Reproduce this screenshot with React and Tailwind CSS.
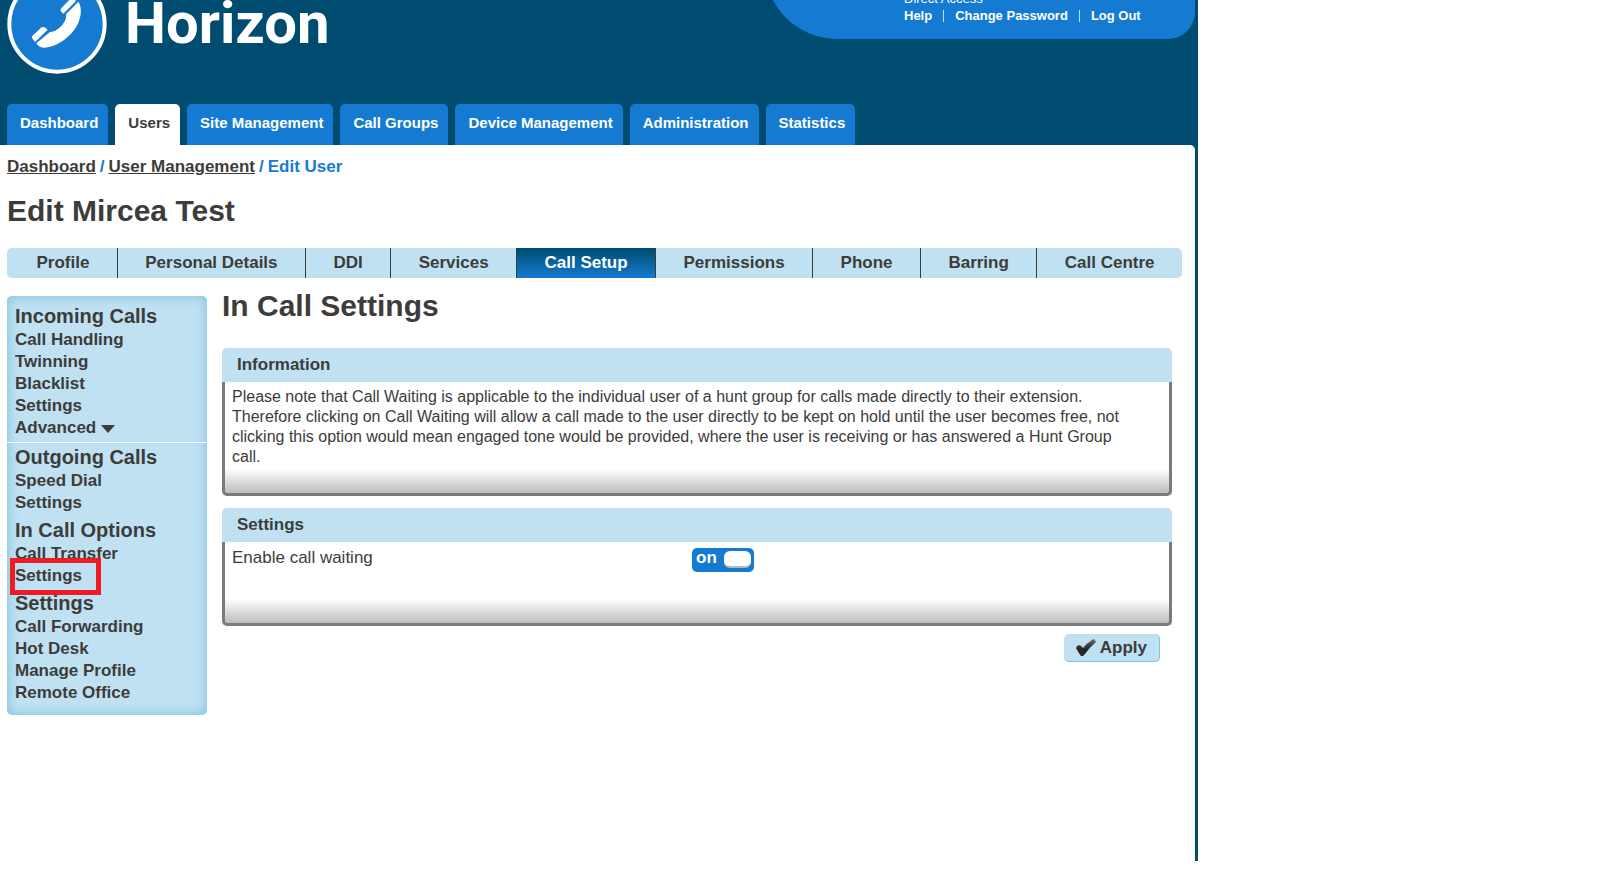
// App.jsx
import React, { useState } from 'react';

const mainTabs = [
  'Dashboard',
  'Users',
  'Site Management',
  'Call Groups',
  'Device Management',
  'Administration',
  'Statistics',
];

const userTabs = [
  'Profile',
  'Personal Details',
  'DDI',
  'Services',
  'Call Setup',
  'Permissions',
  'Phone',
  'Barring',
  'Call Centre',
];

const menuGroups = [
  {
    title: 'Incoming Calls',
    items: ['Call Handling', 'Twinning', 'Blacklist', 'Settings', 'Advanced'],
    divider: true,
  },
  { title: 'Outgoing Calls', items: ['Speed Dial', 'Settings'] },
  { title: 'In Call Options', items: ['Call Transfer', 'Settings'], current: 'Settings' },
  { title: 'Settings', items: ['Call Forwarding', 'Hot Desk', 'Manage Profile', 'Remote Office'] },
];

function Logo() {
  return (
    <a href="#" className="flex items-start">
      {/* Phone badge */}
      <svg className="-mt-[26px] h-[100px] w-[100px]" viewBox="0 0 300 300" aria-hidden="true">
        <circle cx="150" cy="150" r="143" fill="#157bd2" stroke="#fff" strokeWidth="12" />
        <g transform="translate(-21 78)" fill="#fff">
          {/* Handle */}
          <path d="M109 130 L150 96 C170 98 203 66 198 43 L235 5 C245 20 245 42 236 66 C222 102 176 142 130 143 C121 142 113 138 109 130 Z" />
          {/* Ear and mouth pieces */}
          <path d="M96 114 Q95 109 99 106 L123 83 Q129 79 136 83 L143 89 L105 126 Z" />
          <path d="M182 33 Q181 27 185 23 L210 -2 Q215 -6 221 -3 L228 3 L190 41 Z" />
        </g>
      </svg>
      <span className="-mt-3 ml-[18px] font-[Roboto] text-[58px] leading-[70px] font-bold text-white">
        Horizon
      </span>
    </a>
  );
}

function AccountPanel() {
  return (
    <div className="-mt-10 mr-[3px] flex h-[79px] w-[430px] flex-col rounded-br-[27px] rounded-bl-[72px] bg-[#157bd2] pt-[30px] pl-[139px] text-[13px] leading-[17px] text-white">
      <span>Direct Access</span>
      <div className="flex items-center gap-[11px] font-bold">
        <a href="#">Help</a>
        <span className="h-3 w-px bg-[#bfe1f2]" />
        <a href="#">Change Password</a>
        <span className="h-3 w-px bg-[#bfe1f2]" />
        <a href="#">Log Out</a>
      </div>
    </div>
  );
}

function SideMenu() {
  return (
    <nav className="w-[200px] shrink-0 rounded-[5px] bg-[#bfe1f2] pt-2 pb-[11px] font-bold shadow-[inset_0_0_8px_3px_#8fcae7]">
      {menuGroups.map((group) => (
        <div
          key={group.title}
          className={group.divider ? 'mb-[2px] border-b border-white pb-[3px]' : 'mb-1 last:mb-0'}
        >
          <h3 className="mb-px px-2 text-[20px] leading-6">{group.title}</h3>
          <ul>
            {group.items.map((item) => (
              <li key={item} className="relative px-2 text-[17px] leading-[22px]">
                <a href="#">{item}</a>
                {item === 'Advanced' && (
                  <svg className="ml-[5px] inline h-2 w-[14px]" viewBox="0 0 14 8" aria-hidden="true">
                    <path d="M0 0 H14 L7 8 Z" fill="#3c3c3b" />
                  </svg>
                )}
                {/* Marks the page that is open */}
                {item === group.current && (
                  <span className="pointer-events-none absolute -top-[7px] left-[3px] h-[37px] w-[91px] border-5 border-[#ed1c24]" />
                )}
              </li>
            ))}
          </ul>
        </div>
      ))}
    </nav>
  );
}

function Panel({ title, children }) {
  return (
    <section className="mb-3">
      <h3 className="rounded-t-[5px] bg-[#bfe1f2] px-[15px] text-[17px] leading-[34px] font-bold">{title}</h3>
      <div className="rounded-b-[5px] border-3 border-t-0 border-[#7b7b7b] bg-[linear-gradient(#fff,#bdbdbd)] bg-[length:100%_24px] bg-bottom bg-no-repeat px-[7px] leading-5">
        {children}
      </div>
    </section>
  );
}

function Toggle({ id, checked, onChange }) {
  return (
    <span className="relative flex h-6 w-[62px] rounded-[5px] bg-[#157bd2] pl-1">
      <input
        id={id}
        type="checkbox"
        checked={checked}
        onChange={(e) => onChange(e.target.checked)}
        className="absolute inset-0 cursor-pointer appearance-none"
      />
      <span className="w-7 text-[17px] leading-[19px] font-bold text-white">{checked ? 'on' : 'off'}</span>
      <span className="mt-[3px] h-[17px] w-[27px] rounded-md border-b-2 border-[#b8b8b8] bg-white" />
    </span>
  );
}

function App() {
  const [callWaiting, setCallWaiting] = useState(true);

  return (
    <div className="max-w-[1198px] overflow-hidden bg-[#004c70] font-['Liberation_Sans',sans-serif] text-[#3c3c3b]">
      {/* Header */}
      <header className="flex h-[104px] items-start justify-between pl-[7px]">
        <Logo />
        <AccountPanel />
      </header>

      <nav className="flex gap-[7px] pl-[7px] text-[15px] font-bold">
        {mainTabs.map((tab) => (
          <a
            key={tab}
            href="#"
            className={`h-[41px] rounded-t-[5px] pt-[9px] pr-[10px] pl-[13px] leading-5 ${
              tab === 'Users' ? 'bg-white' : 'bg-[#157bd2] text-white'
            }`}
          >
            {tab}
          </a>
        ))}
      </nav>

      {/* Page body */}
      <main className="mr-[3px] rounded-tr-[5px] bg-white pr-[13px] pb-[146px] pl-[7px]">
        <div className="flex gap-1 pt-3 text-[17px] leading-5 font-bold text-[#157bd2]">
          <a href="#" className="text-[#3c3c3b] underline">Dashboard</a>
          <span>/</span>
          <a href="#" className="text-[#3c3c3b] underline">User Management</a>
          <span>/</span>
          <span>Edit User</span>
        </div>

        <h1 className="mt-4 text-[30px] leading-9 font-bold">Edit Mircea Test</h1>

        <nav className="mt-[19px] flex overflow-hidden rounded-[5px] bg-[#bfe1f2] text-[17px] leading-[30px] font-bold">
          {userTabs.map((tab) => (
            <a
              key={tab}
              href="#"
              className={`flex-auto border-r border-[#3c3c3b] text-center first:pl-[2px] last:border-r-0 ${
                tab === 'Call Setup' ? 'bg-linear-to-b from-[#004c70] to-[#157bd2] text-white' : ''
              }`}
            >
              {tab}
            </a>
          ))}
        </nav>

        <div className="mt-[18px] flex items-start gap-[15px] pr-[10px]">
          <SideMenu />

          <div className="flex-1">
            <h2 className="-mt-2 mb-6 text-[30px] leading-9 font-bold">In Call Settings</h2>

            <Panel title="Information">
              <p className="pt-[5px] pb-[26px] text-[16px] leading-5">
                Please note that Call Waiting is applicable to the individual user of a hunt group for calls made
                directly to their extension.
                <br />
                Therefore clicking on Call Waiting will allow a call made to the user directly to be kept on hold
                until the user becomes free, not
                <br />
                clicking this option would mean engaged tone would be provided, where the user is receiving or has
                answered a Hunt Group
                <br />
                call.
              </p>
            </Panel>

            <Panel title="Settings">
              <div className="flex items-start pt-[6px] pb-[51px]">
                <label htmlFor="call-waiting" className="w-1/2 max-w-[460px] text-[17px] leading-5">
                  Enable call waiting
                </label>
                <Toggle id="call-waiting" checked={callWaiting} onChange={setCallWaiting} />
              </div>
            </Panel>

            <div className="-mt-1 flex justify-end pr-3">
              <button
                type="button"
                className="flex h-7 items-center gap-1 rounded-[5px] border-r border-b border-[#7fc4e6] bg-[#bfe1f2] px-3 text-[17px] font-bold"
              >
                <svg className="h-[17px] w-5" viewBox="0 0 20 17" aria-hidden="true">
                  <defs>
                    <linearGradient id="tick" x1="0" y1="1" x2="0" y2="0">
                      <stop offset="0.4" stopColor="#262626" />
                      <stop offset="1" stopColor="#6b6b6b" />
                    </linearGradient>
                  </defs>
                  <path d="M0 9 L1 7 L3 6 Q5 6 7 9 Q11 4 16 1 L18 0 L20 3 Q14 8 9 15 L7 17 L5 17 Q2 13 0 9 Z" fill="url(#tick)" />
                </svg>
                Apply
              </button>
            </div>
          </div>
        </div>
      </main>
    </div>
  );
}

export default App;
